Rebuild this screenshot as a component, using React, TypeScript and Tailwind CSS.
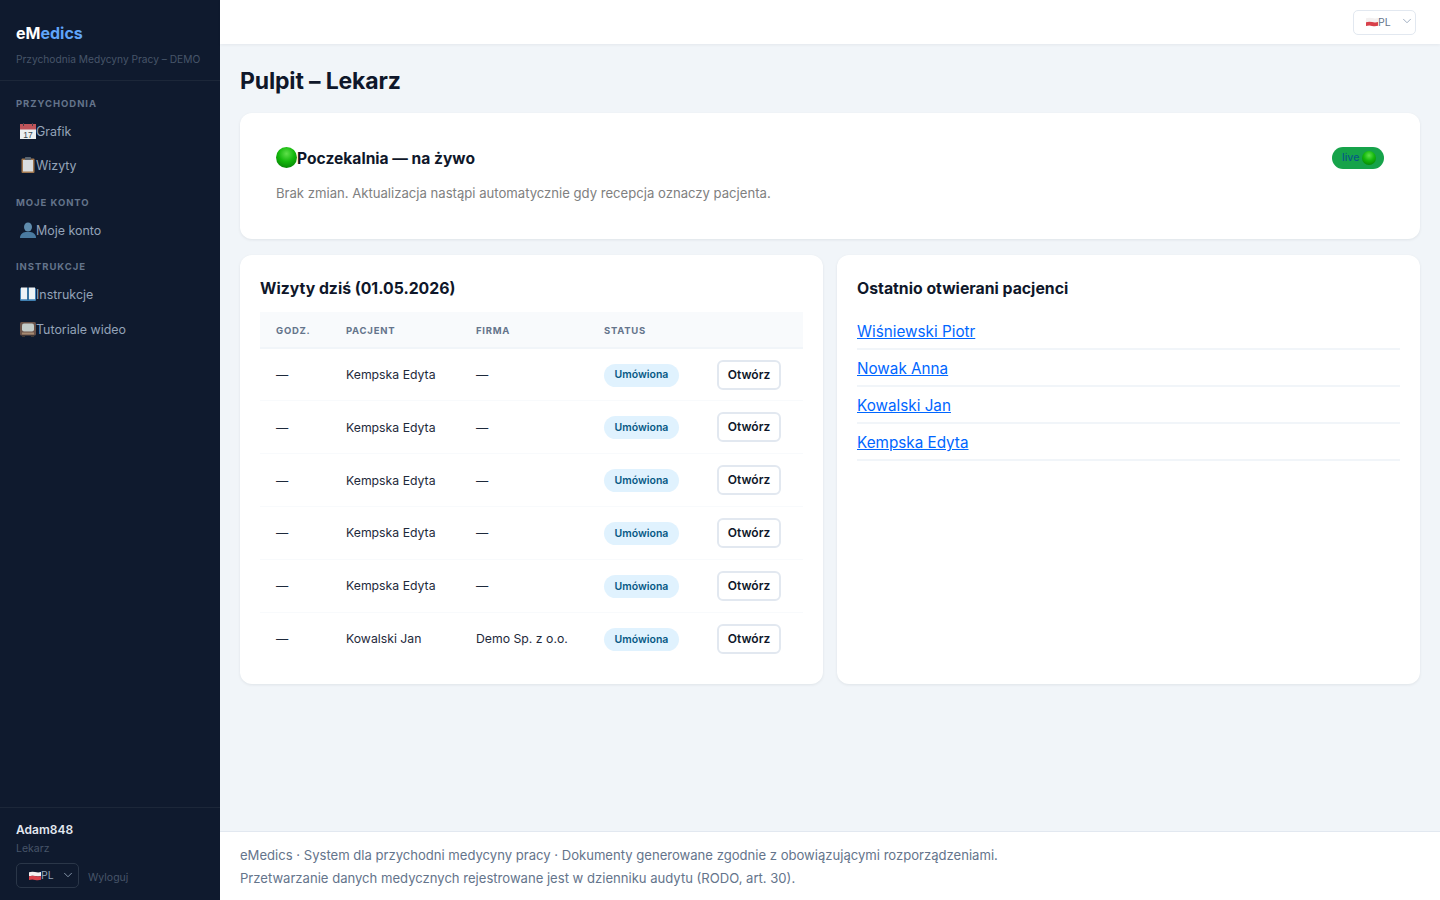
import React from "react";
import { ChevronDown } from "lucide-react";

const font = "font-['Inter','Noto_Sans',sans-serif]";

function Calendar() {
  return (
    <svg viewBox="0 0 16 16" className="w-4 h-4 block">
      <rect x="0" y="1" width="16" height="15" fill="#eceff1" />
      <rect x="0" y="1" width="16" height="5.5" fill="#c0545a" />
      <rect x="3" y="0" width="1" height="3" fill="#4b4048" />
      <rect x="12" y="0" width="1" height="3" fill="#4b4048" />
      <text x="8" y="15" textAnchor="middle" fontSize="8.5" fontWeight="400" fontFamily="Liberation Sans" fill="#37474f">17</text>
    </svg>
  );
}
function Clipboard() {
  return (
    <svg viewBox="0 0 16 16" className="w-4 h-4 block">
      <rect x="1.5" y="1.5" width="13" height="14.5" rx="1" fill="#a1774f" />
      <rect x="3" y="3" width="10" height="11.5" fill="#d9dde0" />
      <rect x="5" y="0" width="6" height="3" rx="0.5" fill="#5b6570" />
    </svg>
  );
}
function Person() {
  return (
    <svg viewBox="0 0 16 16" className="w-4 h-4 block">
      <ellipse cx="8" cy="5" rx="4" ry="4.6" fill="#5f8cad" />
      <path d="M0 16c0-4 3-5.5 5.5-6h5c2.5.5 5.5 2 5.5 6z" fill="#4a7aa0" />
    </svg>
  );
}
function Book() {
  return (
    <svg viewBox="0 0 16 16" className="w-4 h-4 block">
      <rect x="0" y="2" width="16" height="13" rx="1" fill="#3f7fb0" />
      <path d="M1 1.5h6.3v11.7H1zM8.7 1.5H15v11.7H8.7z" fill="#eef2f5" />
      <rect x="7.3" y="1.5" width="1.4" height="12.5" fill="#1f5f8f" />
    </svg>
  );
}
function Tv() {
  return (
    <svg viewBox="0 0 16 16" className="w-4 h-4 block">
      <rect x="0" y="1" width="16" height="13.5" rx="1.5" fill="#6a5248" />
      <rect x="2" y="2.5" width="12" height="8" rx="2" fill="#c3ccc9" />
      <rect x="2" y="11.5" width="12" height="2" fill="#a58a72" />
      <rect x="2" y="14.5" width="3" height="1.5" fill="#3e3733" />
      <rect x="11" y="14.5" width="3" height="1.5" fill="#3e3733" />
    </svg>
  );
}
function Flag() {
  return (
    <svg viewBox="0 0 12 10" className="w-3 h-[10px] block">
      <path d="M0 1.2Q3 .2 6 1t6 .1V5Q9 5.8 6 5T0 5.2z" fill="#f3f0f0" />
      <path d="M0 5.2Q3 4.2 6 5t6 0v3.8q-3 .9-6 .1t-6 .2z" fill="#d8404a" />
    </svg>
  );
}
function GreenDot({ className }: { className: string }) {
  return (
    <svg viewBox="0 0 20 20" className={className}>
      <defs>
        <radialGradient id="gd" cx="50%" cy="32%" r="68%">
          <stop offset="0%" stopColor="#5fe04a" />
          <stop offset="55%" stopColor="#14b80c" />
          <stop offset="100%" stopColor="#078a06" />
        </radialGradient>
      </defs>
      <circle cx="10" cy="10" r="10" fill="url(#gd)" />
    </svg>
  );
}

function NavLink({ icon, label }: { icon: React.ReactNode; label: string }) {
  return (
    <a className="flex items-center h-[34.5px] pl-5 text-[12.45px] text-[#94a3b8]">
      <span className="w-4">{icon}</span>
      <span className="pt-[3px]">{label}</span>
    </a>
  );
}

function Section({ children }: { children: string }) {
  return <div className="px-4 pt-[13px] pb-[4px] text-[9.5px] leading-[13px] font-bold tracking-[0.95px] uppercase text-[#64748b]">{children}</div>;
}

function LangSelect({ dark }: { dark?: boolean }) {
  return dark ? (
    <div className="relative flex items-center w-[63px] h-[25px] pl-[12px] rounded-[5px] border border-[#2a3648] text-[10.5px] text-[#94a3b8]">
      <Flag /><span className="pt-[1px]">PL</span>
      <ChevronDown className="absolute right-[3px] top-[4px] w-[14px] h-[14px] text-[#94a3b8]" strokeWidth={1.5} />
    </div>
  ) : (
    <div className="relative flex items-center w-[63px] h-[25px] pl-[12px] rounded-[5px] border border-[#e2e8f0] bg-white text-[10.5px] text-[#64748b]">
      <Flag /><span className="pt-[2px]">PL</span>
      <ChevronDown className="absolute right-[1px] top-[3px] w-[14px] h-[14px] text-[#94a3b8]" strokeWidth={1.5} />
    </div>
  );
}

const visits = [
  ["Kempska Edyta", "—"],
  ["Kempska Edyta", "—"],
  ["Kempska Edyta", "—"],
  ["Kempska Edyta", "—"],
  ["Kempska Edyta", "—"],
  ["Kowalski Jan", "Demo Sp. z o.o."],
];

const recent = ["Wiśniewski Piotr", "Nowak Anna", "Kowalski Jan", "Kempska Edyta"];

export default function App() {
  return (
    <div className={`flex h-[900px] w-[1440px] overflow-hidden bg-[#f1f5f9] ${font}`}>
      <aside className="flex flex-col w-[220px] shrink-0 bg-[#0f1a2e]">
        <div className="h-[81px] px-4 pt-[23px] border-b border-[#1c2739]">
          <div className="text-[16px] leading-[20px] font-bold text-white">eM<span className="text-[#60a5fa]">edics</span></div>
          <div className="mt-[6px] text-[10.2px] leading-[20px] text-[#475569] whitespace-nowrap">Przychodnia Medycyny Pracy – DEMO</div>
        </div>
        <nav className="flex-1 pt-[2.5px]">
          <Section>Przychodnia</Section>
          <NavLink icon={<Calendar />} label="Grafik" />
          <NavLink icon={<Clipboard />} label="Wizyty" />
          <Section>Moje konto</Section>
          <NavLink icon={<Person />} label="Moje konto" />
          <Section>Instrukcje</Section>
          <NavLink icon={<Book />} label="Instrukcje" />
          <NavLink icon={<Tv />} label="Tutoriale wideo" />
        </nav>
        <div className="h-[93px] px-4 pt-[14px] border-t border-[#1c2739]">
          <div className="text-[12px] leading-[16px] font-semibold text-[#e2e8f0]">Adam848</div>
          <div className="mt-[3px] text-[10.5px] leading-[16px] text-[#475569]">Lekarz</div>
          <div className="mt-[6px] flex items-center gap-[9px]">
            <LangSelect dark />
            <span className="pt-[5px] text-[10.5px] text-[#475569]">Wyloguj</span>
          </div>
        </div>
      </aside>

      <main className="flex flex-col flex-1 min-w-0">
        <header className="flex items-center justify-end h-[44px] pr-[24px] bg-white shadow-[0_1px_3px_rgba(15,23,42,0.06)]">
          <LangSelect />
        </header>
        <div className="flex-1 px-5 pt-[20px]">
          <h1 className="text-[23px] leading-[34px] font-bold text-[#0f172a] tracking-[-0.15px]">Pulpit – Lekarz</h1>
          <section className="mt-[15px] h-[126px] px-9 pt-[31px] rounded-[12px] bg-white shadow-[0_1px_3px_rgba(15,23,42,0.08)]">
            <div className="flex items-center justify-between h-[28px]">
              <div className="flex items-center text-[15.6px] font-bold text-[#0f172a]">
                <GreenDot className="w-[21px] h-[21px]" /><span className="pt-[2px]">Poczekalnia — na żywo</span>
              </div>
              <span className="flex items-center gap-[3px] h-[22px] w-[52px] pl-[10px] rounded-full bg-[#16a34a] text-[10.5px] font-medium text-[#075985]">
                live<GreenDot className="w-[14px] h-[14px]" />
              </span>
            </div>
            <p className="mt-[11px] text-[13.12px] leading-[20px] text-[#808080]">Brak zmian. Aktualizacja nastąpi automatycznie gdy recepcja oznaczy pacjenta.</p>
          </section>

          <div className="mt-4 grid grid-cols-2 gap-[14px] h-[429px]">
            <section className="px-5 pt-[21px] rounded-[12px] bg-white shadow-[0_1px_3px_rgba(15,23,42,0.08)]">
              <h2 className="text-[15.8px] leading-[26px] font-bold text-[#0f172a]">Wizyty dziś (01.05.2026)</h2>
              <table className="mt-[10px] w-full table-fixed border-collapse">
                <thead>
                  <tr className="h-[36px] bg-[#f8fafc] border-b-2 border-[#f1f5f9] text-left text-[9.5px] tracking-[0.75px] uppercase text-[#64748b]">
                    <th className="w-[70px] pl-4 pt-[3px] font-bold">Godz.</th>
                    <th className="w-[130px] pl-4 pt-[3px] font-bold">Pacjent</th>
                    <th className="w-[128px] pl-4 pt-[3px] font-bold">Firma</th>
                    <th className="w-[113px] pl-4 pt-[3px] font-bold">Status</th>
                    <th></th>
                  </tr>
                </thead>
                <tbody>
                  {visits.map(([name, firm], i) => (
                    <tr key={i} className={`h-[52.9px] text-[12.25px] text-[#1e293b] ${i < 5 ? "border-b border-[#f8fafc]" : ""}`}>
                      <td className="pl-4 pt-[1px]">—</td>
                      <td className="pl-4 pt-[1px]">{name}</td>
                      <td className="pl-4 pt-[1px] whitespace-nowrap">{firm}</td>
                      <td className="pl-4 pt-[1px]">
                        <span className="inline-flex items-center h-[23px] w-[75px] justify-center rounded-full bg-[#e0f2fe] text-[10.5px] font-semibold text-[#075985]">Umówiona</span>
                      </td>
                      <td className="pl-[16px]">
                        <button className="flex items-center justify-center w-[64px] h-[30px] rounded-[6px] border-2 border-[#e2e8f0] bg-white text-[12px] font-semibold text-[#0f172a]">Otwórz</button>
                      </td>
                    </tr>
                  ))}
                </tbody>
              </table>
            </section>
            <section className="px-5 pt-[21px] rounded-[12px] bg-white shadow-[0_1px_3px_rgba(15,23,42,0.08)]">
              <h2 className="text-[15.8px] leading-[26px] font-bold text-[#0f172a]">Ostatnio otwierani pacjenci</h2>
              <ul className="mt-[11px]">
                {recent.map((r) => (
                  <li key={r} className="h-[37px] pt-[7px] border-b-2 border-[#f1f5f9] text-[15.25px] leading-[24px]">
                    <a className="text-[#0066ff] underline">{r}</a>
                  </li>
                ))}
              </ul>
            </section>
          </div>
        </div>
        <footer className="h-[69px] px-5 pt-[12px] bg-white border-t border-[#e2e8f0] text-[13.09px] leading-[23px] text-[#64748b]">
          <div>eMedics · System dla przychodni medycyny pracy · Dokumenty generowane zgodnie z obowiązującymi rozporządzeniami.</div>
          <div>Przetwarzanie danych medycznych rejestrowane jest w dzienniku audytu (RODO, art. 30).</div>
        </footer>
      </main>
    </div>
  );
}
